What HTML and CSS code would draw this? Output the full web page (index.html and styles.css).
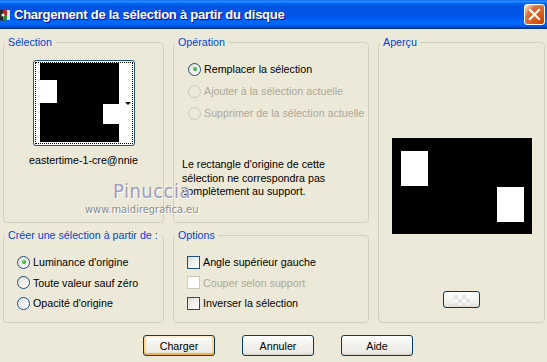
FILE: index.html
```html
<!DOCTYPE html>
<html lang="fr">
<head>
  <meta charset="UTF-8" />
  <meta name="viewport" content="width=device-width, initial-scale=1.0" />
  <title>Chargement de la sélection à partir du disque</title>
  <link rel="stylesheet" href="styles.css">
</head>
<body>
  <div class="window">
    <div class="titlebar">
      <svg class="app-icon" width="10" height="14" viewBox="0 0 10 14">
        <circle cx="3" cy="7" r="6" fill="#2b2b2b" />
        <path d="M3 1 A6 6 0 0 1 9 7 L3 7 Z" fill="#c8202a" />
        <path d="M3 7 L9 7 A6 6 0 0 1 3 13 Z" fill="#1f8f3a" />
        <circle cx="3" cy="7" r="1.6" fill="#e8e8e8" />
        <rect x="7" y="2" width="3" height="10" fill="#d8e6f8" />
      </svg>
      <span class="title">Chargement de la sélection à partir du disque</span>
      <button class="close" type="button" aria-label="Fermer">
        <svg width="13" height="13" viewBox="0 0 13 13">
          <path d="M2 2 L11 11 M11 2 L2 11" stroke="#fff" stroke-width="2.2" stroke-linecap="square" />
        </svg>
      </button>
    </div>

    <div class="client">
      <div class="groups">
        <fieldset class="group g-selection">
          <legend>Sélection</legend>
          <div class="group-body">
            <div class="picker">
              <div class="picker-inner">
                <svg class="thumb" width="79" height="79" viewBox="0 0 79 79">
                  <rect width="79" height="79" fill="#000" />
                  <rect x="0" y="17" width="17" height="23" fill="#fff" />
                  <rect x="63" y="41" width="16" height="20" fill="#fff" />
                </svg>
                <div class="picker-side"><span class="arrow"></span></div>
              </div>
            </div>
            <div class="picker-name">eastertime-1-cre@nnie</div>
          </div>
        </fieldset>

        <fieldset class="group g-operation">
          <legend>Opération</legend>
          <div class="group-body">
            <label class="opt"><span class="radio checked"></span>Remplacer la sélection</label>
            <label class="opt disabled"><span class="radio"></span>Ajouter à la sélection actuelle</label>
            <label class="opt disabled"><span class="radio"></span>Supprimer de la sélection actuelle</label>
            <p class="note">Le rectangle d'origine de cette<br>sélection ne correspondra pas<br>complètement au support.</p>
          </div>
        </fieldset>

        <fieldset class="group g-preview">
          <legend>Aperçu</legend>
          <div class="group-body">
            <svg class="preview" width="140" height="96" viewBox="0 0 140 96">
              <rect width="140" height="96" fill="#000" />
              <rect x="9" y="13" width="27" height="35" fill="#fff" />
              <rect x="105" y="49" width="27" height="35" fill="#fff" />
            </svg>
            <button class="mini" type="button"><span class="checker"></span></button>
          </div>
        </fieldset>

        <fieldset class="group g-source">
          <legend>Créer une sélection à partir de :</legend>
          <div class="group-body">
            <label class="opt row"><span class="radio checked"></span>Luminance d'origine</label>
            <label class="opt row"><span class="radio"></span>Toute valeur sauf zéro</label>
            <label class="opt row"><span class="radio"></span>Opacité d'origine</label>
          </div>
        </fieldset>

        <fieldset class="group g-options">
          <legend>Options</legend>
          <div class="group-body">
            <label class="opt row"><span class="check"></span>Angle supérieur gauche</label>
            <label class="opt row disabled"><span class="check"></span>Couper selon support</label>
            <label class="opt row"><span class="check"></span>Inverser la sélection</label>
          </div>
        </fieldset>
      </div>

      <div class="actions">
        <button class="btn default" type="button">Charger</button>
        <button class="btn" type="button">Annuler</button>
        <button class="btn" type="button">Aide</button>
      </div>

      <div class="watermark">
        <span class="wm-name">Pinuccia</span>
        <span class="wm-url">www.maidiregrafica.eu</span>
      </div>
    </div>
  </div>
</body>
</html>
```

FILE: styles.css
```css
:root {
  --fond: #ece9d8;
  --bord-groupe: #d0d0bf;
  --bleu-titre: #0046d5;
  --gris-inactif: #aca899;
  --bord-ctrl: #1c5180;
  --bord-btn: #003c74;
}

* {
  box-sizing: border-box;
}

body {
  margin: 0;
  background: var(--fond);
  font-family: "Liberation Sans", Arial, sans-serif;
  font-size: 10.7px;
  color: #000;
}

.window {
  width: 547px;
  height: 362px;
  overflow: hidden;
  background: var(--fond);
}

/* barre de titre */
.titlebar {
  height: 29px;
  display: flex;
  align-items: center;
  padding-right: 2px;
  background: linear-gradient(to bottom, #0058ee 0%, #3593ff 4%, #288eff 6%, #127dff 8%, #036ffc 10%, #0262ee 14%, #0057e5 20%, #0054e3 24%, #0055eb 56%, #005bf5 66%, #026afe 76%, #0062ef 86%, #0052d6 92%, #0040ab 94%, #003092 100%);
}

.app-icon {
  flex: none;
  margin-right: 4px;
}

.title {
  flex: 1;
  color: #fff;
  font-weight: bold;
  font-size: 13px;
  letter-spacing: -0.25px;
  text-shadow: 1px 1px #0f1089;
}

.close {
  width: 21px;
  height: 21px;
  padding: 0;
  display: flex;
  align-items: center;
  justify-content: center;
  border: 1px solid #fff;
  border-radius: 3px;
  background: radial-gradient(circle at 90% 90%, #cc4600 0%, #dc6527 55%, #cd7546 68%, #ffccb2 90%, #fff 100%);
}

/* zone client */
.client {
  position: relative;
  padding-top: 7px;
}

.groups {
  display: grid;
  grid-template-columns: 161px 196px 167px;
  grid-template-rows: 187px 94px;
  column-gap: 9px;
  row-gap: 6px;
  padding-left: 3px;
}

.group {
  margin: 0;
  padding: 0;
  min-width: 0;
  border: 1px solid var(--bord-groupe);
  border-radius: 4px;
}

.group legend {
  margin-left: 1px;
  padding: 0 3px;
  line-height: 13px;
  white-space: nowrap;
  color: var(--bleu-titre);
}

.g-preview {
  grid-column: 3;
  grid-row: 1 / span 2;
}

/* Sélection */
.g-selection .group-body {
  padding-top: 11px;
  display: flex;
  flex-direction: column;
  align-items: center;
}

.picker {
  width: 102px;
  height: 86px;
  padding: 1px;
  border: 1px solid var(--bord-ctrl);
  border-radius: 3px;
  background: #fff;
}

.picker-inner {
  height: 100%;
  display: flex;
  padding-left: 4px;
  border: 1px dotted #000;
}

.thumb {
  display: block;
  flex: none;
}

.picker-side {
  flex: 1;
  display: flex;
  align-items: center;
  justify-content: flex-end;
  padding-right: 1px;
}

.arrow {
  width: 0;
  height: 0;
  border-left: 3px solid transparent;
  border-right: 3px solid transparent;
  border-top: 3px solid #000;
}

.picker-name {
  margin-top: 8px;
  line-height: 13px;
}

/* options et radios */
.opt {
  display: flex;
  align-items: center;
  gap: 3px;
  height: 22px;
  white-space: nowrap;
}

.opt.row {
  height: 20.5px;
}

.opt.disabled {
  color: var(--gris-inactif);
}

.radio,
.check {
  flex: none;
  width: 13px;
  height: 13px;
  border: 1px solid var(--bord-ctrl);
  background: linear-gradient(135deg, #dcdcd7 0%, #fff 90%);
}

.radio {
  border-radius: 50%;
  display: flex;
  align-items: center;
  justify-content: center;
}

.radio.checked::after {
  content: "";
  width: 4px;
  height: 4px;
  border-radius: 50%;
  background: radial-gradient(circle at 35% 35%, #6ee06a 0%, #21a121 70%, #1a8a1a 100%);
}

.disabled .radio,
.disabled .check {
  border-color: #cac8bb;
  background: var(--fond);
}

.disabled .check {
  background: #fff;
}

.g-operation .group-body {
  padding: 9px 0 0 14px;
}

.note {
  margin: 34px 0 0 -6px;
  line-height: 13.5px;
}

.g-source .group-body {
  padding: 10px 0 0 13px;
}

.g-options .group-body {
  padding: 10px 0 0 13px;
}

/* Aperçu */
.g-preview .group-body {
  display: flex;
  flex-direction: column;
  align-items: center;
  padding-top: 89px;
}

.preview {
  display: block;
}

.mini {
  margin-top: 57px;
  width: 37px;
  height: 17px;
  padding: 0;
  display: flex;
  align-items: center;
  justify-content: center;
  border: 1px solid var(--bord-btn);
  border-radius: 3px;
  background: linear-gradient(to bottom, #fff 0%, #f0f0ea 70%, #dedbd0 100%);
}

.checker {
  width: 16px;
  height: 10px;
  opacity: 0.6;
  background: repeating-conic-gradient(#fff 0 25%, #d9d9d9 0 50%) 0 0 / 8px 8px;
}

/* boutons */
.actions {
  display: flex;
  gap: 27px;
  margin-top: 12px;
  padding-left: 143px;
}

.btn {
  width: 72px;
  height: 21px;
  padding: 0;
  font: inherit;
  color: #000;
  border: 1px solid var(--bord-btn);
  border-radius: 3px;
  background: linear-gradient(to bottom, #fff 0%, #f4f3ee 40%, #ecebe6 85%, #d6d0c5 100%);
}

.btn.default {
  box-shadow: inset 0 -2px 0 #f8b330, inset 2px 0 0 #fcd68a, inset -2px 0 0 #fcd68a, inset 0 2px 0 #fff0cf;
}

/* filigrane */
.watermark {
  position: absolute;
  left: 0;
  top: 0;
  pointer-events: none;
}

.wm-name {
  position: absolute;
  left: 113px;
  top: 152px;
  font-family: "DejaVu Sans Condensed", "DejaVu Sans", sans-serif;
  font-stretch: condensed;
  font-size: 20px;
  line-height: 20px;
  color: #9d9dc2;
  letter-spacing: 0.5px;
  text-shadow: 1px 1px 0 #fff;
  white-space: nowrap;
}

.wm-url {
  position: absolute;
  left: 85px;
  top: 175px;
  font-family: "DejaVu Sans Condensed", "DejaVu Sans", sans-serif;
  font-stretch: condensed;
  font-size: 11px;
  line-height: 11px;
  color: #8c8c8c;
  text-shadow: 1px 1px 0 #fff;
  white-space: nowrap;
}
```
